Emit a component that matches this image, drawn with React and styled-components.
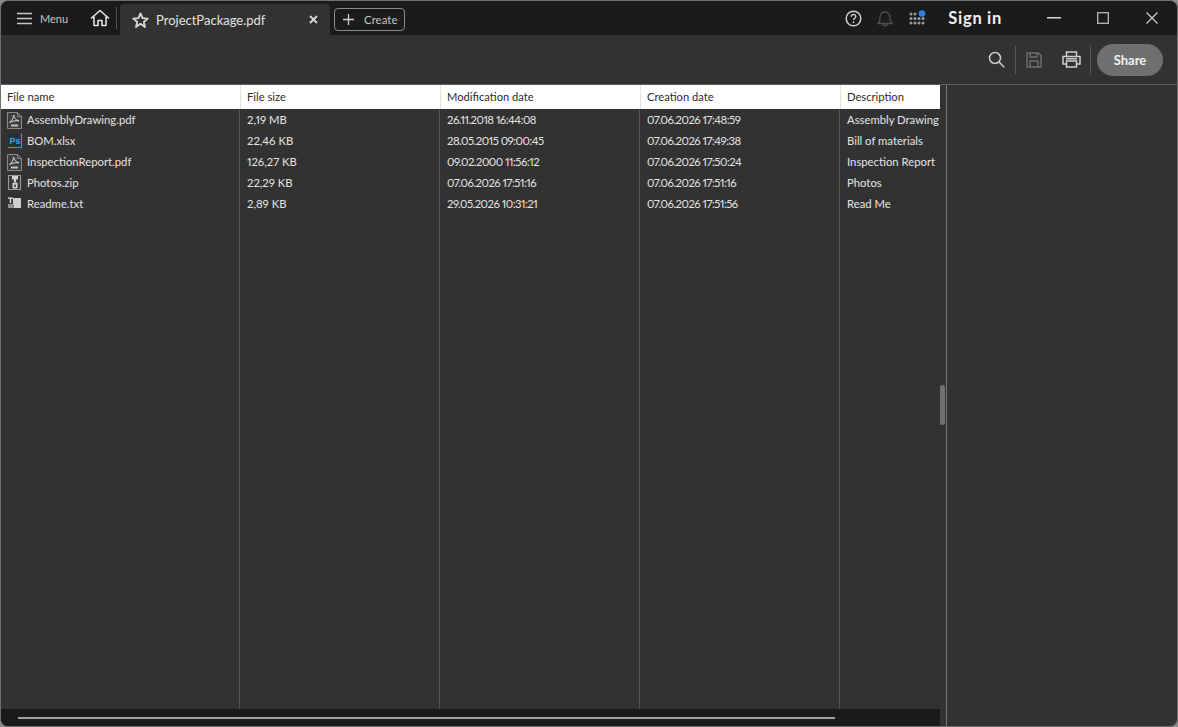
import React from 'react';
import styled, { createGlobalStyle } from 'styled-components';

const GlobalStyle = createGlobalStyle`
  html, body {
    margin: 0;
    height: 100%;
    background: #8c8c8c;
    overflow: hidden;
  }
  body {
    font-family: Lato, "Open Sans", sans-serif;
    font-variant-numeric: proportional-nums;
  }
`;

const Window = styled.div`
  width: 1178px;
  height: 727px;
  box-sizing: border-box;
  display: flex;
  flex-direction: column;
  background: #323232;
  border: 1px solid #6e6e6e;
  border-radius: 8px;
  overflow: hidden;
`;

const TitleBar = styled.header`
  height: 34px;
  flex: none;
  display: flex;
  align-items: stretch;
  padding-right: 1px;
  background: #1b1b1b;
  color: #d0d0d0;
`;

const MenuButton = styled.div`
  display: flex;
  align-items: center;
  gap: 8px;
  padding-left: 16px;
  width: 84px;
  box-sizing: border-box;
  font-size: 11px;
  color: #c4c4c4;
`;

const HomeButton = styled.div`
  width: 30px;
  display: flex;
  align-items: center;
  justify-content: center;
  margin-right: 1px;
`;

const Divider = styled.div`
  width: 1px;
  align-self: center;
  height: ${props => props.$h}px;
  background: ${props => props.$color || '#555'};
  flex: none;
`;

const Tab = styled.div`
  width: 210px;
  margin-left: 3px;
  margin-top: 3px;
  box-sizing: border-box;
  padding: 0 12px 0 12px;
  display: flex;
  align-items: center;
  background: #323232;
  border-radius: 4px 4px 0 0;
  color: #e2e2e2;
  font-size: 13px;
`;

const TabName = styled.span`
  margin-left: 7px;
  flex: 1;
`;

const CreateButton = styled.div`
  margin: 7px 0 0 4px;
  height: 23px;
  width: 71px;
  box-sizing: border-box;
  border: 1px solid #8a8a8a;
  border-radius: 4px;
  display: flex;
  align-items: center;
  gap: 10px;
  padding-left: 8px;
  font-size: 11.5px;
  color: #c4c4c4;
`;

const Spacer = styled.div`
  flex: 1;
`;

const IconSlot = styled.div`
  width: ${props => props.$w || 32}px;
  display: flex;
  align-items: center;
  justify-content: center;
  flex: none;
`;

const SignIn = styled.div`
  font-size: 16.5px;
  font-weight: 700;
  color: #f2f2f2;
  letter-spacing: 0.7px;
  margin: 0 27px 0 15px;
  display: flex;
  align-items: center;
`;

const WindowButton = styled.div`
  width: 49px;
  display: flex;
  align-items: center;
  justify-content: center;
  flex: none;
`;

const Toolbar = styled.div`
  height: 50px;
  flex: none;
  box-sizing: border-box;
  border-bottom: 1px solid #5c5c5c;
  background: #323232;
  display: flex;
  align-items: center;
  justify-content: flex-end;
  padding: 0 14px 0 0;
`;

const ShareButton = styled.div`
  width: 66px;
  height: 32px;
  margin-left: 6px;
  border-radius: 16px;
  background: #6f6f6f;
  color: #f0f0f0;
  font-size: 13px;
  font-weight: 700;
  display: flex;
  align-items: center;
  justify-content: center;
`;

const Body = styled.main`
  flex: 1;
  min-height: 0;
  display: flex;
`;

const ListPane = styled.section`
  width: 946px;
  box-sizing: border-box;
  border-right: 1px solid #777;
  position: relative;
  display: flex;
  flex-direction: column;
`;

const Columns = styled.div`
  flex: 1;
  min-height: 0;
  width: 939px;
  display: flex;
`;

const Column = styled.div`
  flex: none;
  width: ${props => props.$w}px;
  display: flex;
  flex-direction: column;
  overflow: hidden;
`;

const HeaderCell = styled.div`
  height: 24px;
  flex: none;
  box-sizing: border-box;
  background: #fff;
  color: #2c2c2c;
  font-size: 11.2px;
  padding: 0 0 1px ${props => (props.$first ? 6 : 7)}px;
  display: flex;
  align-items: center;
  white-space: nowrap;
  box-shadow: ${props => (props.$first ? 'none' : 'inset 1px 0 0 #e2e2e2')};
`;

const ColumnBody = styled.div`
  flex: 1;
  box-sizing: border-box;
  border-right: ${props => (props.$last ? 'none' : '1px solid #55555c')};
`;

const Cell = styled.div`
  height: 21px;
  display: flex;
  align-items: center;
  gap: 4px;
  padding-left: ${props => (props.$first ? 6 : 7)}px;
  color: #e4e4e4;
  font-size: 11.3px;
  letter-spacing: ${props => (props.$tight ? '-0.5px' : 'normal')};
  white-space: nowrap;
`;

const FileIcon = styled.svg`
  width: 16px;
  height: 18px;
  flex: none;
`;

const HScroll = styled.div`
  height: 17px;
  width: 939px;
  flex: none;
  background: #1a1a1a;
  display: flex;
  align-items: center;
  padding-left: 17px;
  box-sizing: border-box;
`;

const HThumb = styled.div`
  width: 817px;
  height: 2px;
  background: #a0a0a0;
`;

const VThumb = styled.div`
  position: absolute;
  left: 939px;
  top: 300px;
  width: 5px;
  height: 40px;
  border-radius: 2px;
  background: #707070;
`;

const PdfIcon = () => (
  <FileIcon viewBox="0 0 16 18" fill="none">
    <path d="M.5 1.500h10l4 4v12H.5z" stroke="#8a8a8a" fill="#3e3e3e" />
    <path d="M10.500 1.500v4h4" stroke="#8a8a8a" />
    <path d="M2.500 11.500c2-1 3.500-3.500 4.200-7.500.4 3 2 5 5.300 5.800-3.500-.3-6.500.2-9.500 1.700z" stroke="#e2e2e2" strokeWidth=".9" />
    <rect x="4" y="13.500" width="7" height="2" fill="#bdbdbd" />
  </FileIcon>
);

const PsIcon = () => (
  <FileIcon viewBox="0 0 16 18" fill="none">
    <rect x="1" y="2" width="13" height="13" fill="#273238" />
    <path d="M1 15.500h13.500V1.500" stroke="#2f9fd8" strokeWidth="1.200" />
    <text x="2.500" y="11.500" fontSize="9" fontWeight="700" fill="#38a9e4" fontFamily="Liberation Sans, sans-serif">Ps</text>
  </FileIcon>
);

const ZipIcon = () => (
  <FileIcon viewBox="0 0 16 18" fill="none">
    <rect x="1.500" y="1.500" width="12" height="14" stroke="#9c9c9c" fill="#3a3a3a" />
    <path d="M5 2h6v3.500H9V8H7V5.500H5z" fill="#d4d4d4" />
    <rect x="5.500" y="8.500" width="5" height="6" rx="1" fill="#d4d4d4" />
    <rect x="7.200" y="10.500" width="1.600" height="2.500" fill="#333" />
  </FileIcon>
);

const TxtIcon = () => (
  <FileIcon viewBox="0 0 16 18" fill="none">
    <rect x="6" y="3" width="8" height="10" fill="#cfcfcf" />
    <rect x="1" y="9" width="6" height="4" fill="#8e8e8e" />
    <path d="M1 2.500h5v1.200H4.200V8H2.800V3.700H1z" fill="#e0e0e0" />
  </FileIcon>
);

const files = [
  { name: 'AssemblyDrawing.pdf', icon: PdfIcon, size: '2,19 MB', modified: '26.11.2018 16:44:08', created: '07.06.2026 17:48:59', description: 'Assembly Drawing' },
  { name: 'BOM.xlsx', icon: PsIcon, size: '22,46 KB', modified: '28.05.2015 09:00:45', created: '07.06.2026 17:49:38', description: 'Bill of materials' },
  { name: 'InspectionReport.pdf', icon: PdfIcon, size: '126,27 KB', modified: '09.02.2000 11:56:12', created: '07.06.2026 17:50:24', description: 'Inspection Report' },
  { name: 'Photos.zip', icon: ZipIcon, size: '22,29 KB', modified: '07.06.2026 17:51:16', created: '07.06.2026 17:51:16', description: 'Photos' },
  { name: 'Readme.txt', icon: TxtIcon, size: '2,89 KB', modified: '29.05.2026 10:31:21', created: '07.06.2026 17:51:56', description: 'Read Me' },
];

const columns = [
  { title: 'File name', key: 'name', width: 239, first: true },
  { title: 'File size', key: 'size', width: 200 },
  { title: 'Modification date', key: 'modified', width: 200, tight: true },
  { title: 'Creation date', key: 'created', width: 200, tight: true },
  { title: 'Description', key: 'description', width: 100, last: true },
];

export default function App() {
  return (
    <Window>
      <GlobalStyle />
      <TitleBar>
        <MenuButton>
          <svg width="15" height="13" viewBox="0 0 15 13" stroke="#c8c8c8" strokeWidth="1.500">
            <path d="M0 1.500h15M0 6.500h15M0 11.500h15" />
          </svg>
          Menu
        </MenuButton>
        <HomeButton>
          <svg width="20" height="18" viewBox="0 0 20 18" fill="none" stroke="#e0e0e0" strokeWidth="1.600" strokeLinejoin="round">
            <path d="M1 9.500 10 1.500l9 8M4 7.500V16.500h4v-5h4v5h4V7.500" />
          </svg>
        </HomeButton>
        <Divider $h={22} />
        <Tab>
          <svg width="17" height="16" viewBox="0 0 24 23" fill="none" stroke="#d8d8d8" strokeWidth="2.600" strokeLinejoin="round">
            <path d="M12 2l3 6.800 7.400.7-5.600 4.900 1.700 7.200L12 17l-6.500 4.600 1.700-7.200L1.600 9.500 9 8.800z" />
          </svg>
          <TabName>ProjectPackage.pdf</TabName>
          <svg width="9" height="9" viewBox="0 0 9 9" stroke="#d8d8d8" strokeWidth="1.800">
            <path d="M1 1l7 7M8 1L1 8" />
          </svg>
        </Tab>
        <CreateButton>
          <svg width="11" height="11" viewBox="0 0 11 11" stroke="#d0d0d0" strokeWidth="1.300">
            <path d="M5.500 0v11M0 5.500h11" />
          </svg>
          Create
        </CreateButton>
        <Spacer />
        <IconSlot>
          <svg width="17" height="17" viewBox="0 0 17 17" fill="none">
            <circle cx="8.500" cy="8.500" r="7.300" stroke="#cfcfcf" strokeWidth="1.500" />
            <path d="M6.300 6.700c0-3 4.500-3 4.500-.2 0 1.700-2.300 1.700-2.300 3.500" stroke="#cfcfcf" strokeWidth="1.400" />
            <circle cx="8.500" cy="12.200" r=".9" fill="#cfcfcf" />
          </svg>
        </IconSlot>
        <IconSlot>
          <svg width="16" height="17" viewBox="0 0 16 17" fill="none" stroke="#505050" strokeWidth="1.300">
            <path d="M1 13.500c2-1.500 2-3 2-6s2-5.500 5-5.500 5 2.500 5 5.500 0 4.500 2 6zM6 14c0 2.500 4 2.500 4 0" />
          </svg>
        </IconSlot>
        <IconSlot>
          <svg width="17" height="17" viewBox="0 0 17 17" fill="#9a9a9a">
            <circle cx="2" cy="4" r="1.500" /><circle cx="6" cy="4" r="1.500" />
            <circle cx="2" cy="8.500" r="1.500" /><circle cx="6" cy="8.500" r="1.500" /><circle cx="10" cy="8.500" r="1.500" /><circle cx="14" cy="8.500" r="1.500" />
            <circle cx="2" cy="13" r="1.500" /><circle cx="6" cy="13" r="1.500" /><circle cx="10" cy="13" r="1.500" /><circle cx="14" cy="13" r="1.500" />
            <circle cx="13" cy="3.500" r="3.300" fill="#2c7fe0" />
          </svg>
        </IconSlot>
        <SignIn>Sign in</SignIn>
        <WindowButton>
          <svg width="14" height="2" viewBox="0 0 14 2" fill="#d8d8d8"><rect width="14" height="1.500" /></svg>
        </WindowButton>
        <WindowButton>
          <svg width="12" height="12" viewBox="0 0 12 12" fill="none" stroke="#b8b8b8" strokeWidth="1.300"><rect x=".7" y=".7" width="10.600" height="10.600" /></svg>
        </WindowButton>
        <WindowButton>
          <svg width="12" height="12" viewBox="0 0 12 12" stroke="#d0d0d0" strokeWidth="1.200"><path d="M.5.500l11 11M11.500.500l-11 11" /></svg>
        </WindowButton>
      </TitleBar>
      <Toolbar>
        <IconSlot $w={38}>
          <svg width="17" height="17" viewBox="0 0 17 17" fill="none" stroke="#cfcfcf" strokeWidth="1.500">
            <circle cx="7" cy="7" r="5.500" /><path d="M11 11l5.300 5.300" />
          </svg>
        </IconSlot>
        <Divider $h={28} $color="#555" />
        <IconSlot $w={36}>
          <svg width="16" height="16" viewBox="0 0 16 16" fill="none" stroke="#707070" strokeWidth="1.400">
            <path d="M1 1h11.500L15 3.500V15H1zM4 1v4h7V1M4 15V9h8v6" />
          </svg>
        </IconSlot>
        <IconSlot $w={38}>
          <svg width="19" height="17" viewBox="0 0 19 17" fill="none" stroke="#d0d0d0" strokeWidth="1.500">
            <path d="M4.500 5V1h10v4M4.500 13H1V5.500h17V13h-3.500" /><path d="M4.500 10h10v6h-10z" /><path d="M4 7.800h11" />
          </svg>
        </IconSlot>
        <Divider $h={28} $color="#555" />
        <ShareButton>Share</ShareButton>
      </Toolbar>
      <Body>
        <ListPane>
          <Columns>
            {columns.map(col => (
              <Column key={col.key} $w={col.width}>
                <HeaderCell $first={col.first}>{col.title}</HeaderCell>
                <ColumnBody $last={col.last}>
                  {files.map(file => (
                    <Cell key={file.name} $first={col.first} $tight={col.tight}>
                      {col.first && <file.icon />}
                      {file[col.key]}
                    </Cell>
                  ))}
                </ColumnBody>
              </Column>
            ))}
          </Columns>
          <HScroll><HThumb /></HScroll>
          <VThumb />
        </ListPane>
      </Body>
    </Window>
  );
}
